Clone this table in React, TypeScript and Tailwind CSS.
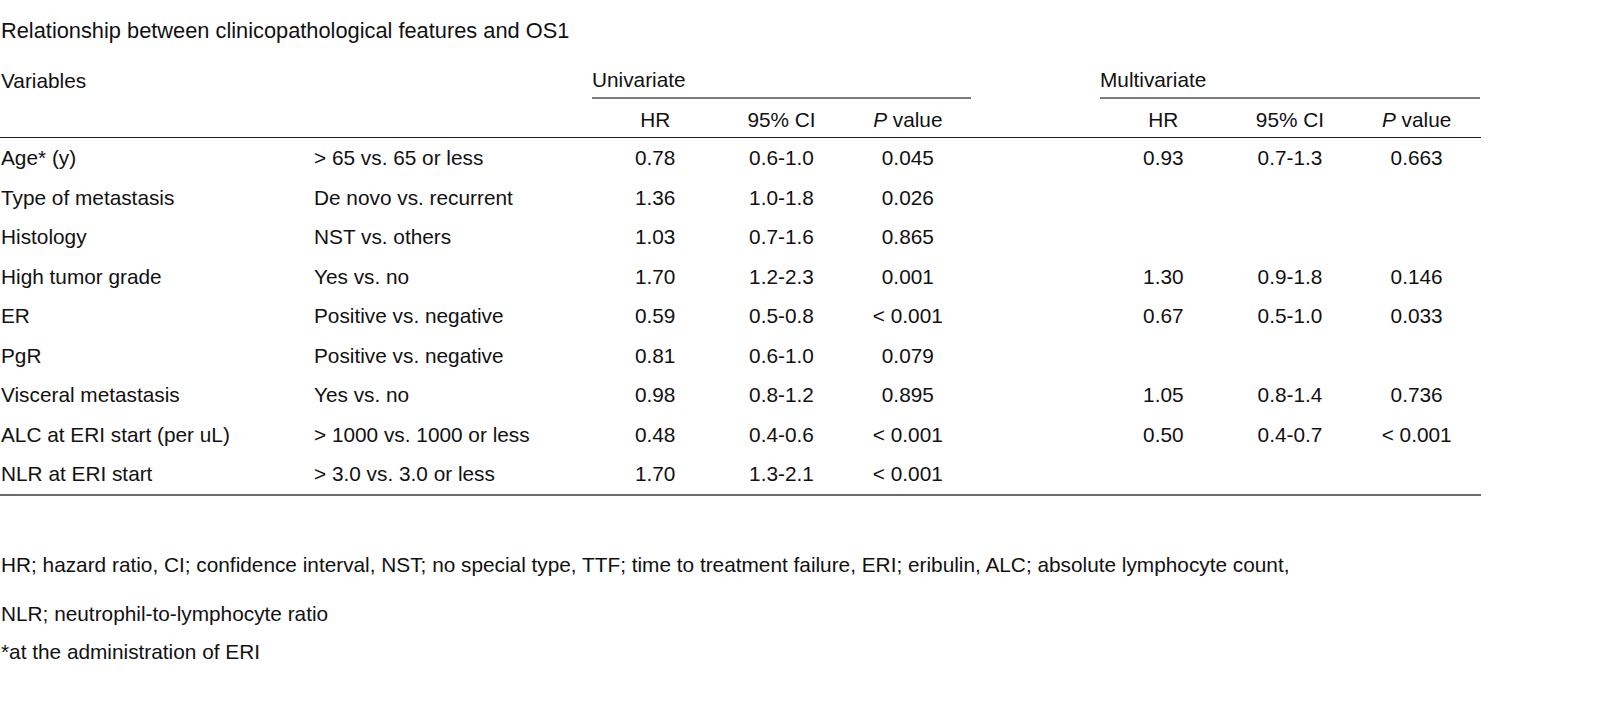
const rows: string[][] = [
  ['Age* (y)', '> 65 vs. 65 or less', '0.78', '0.6-1.0', '0.045', '0.93', '0.7-1.3', '0.663'],
  ['Type of metastasis', 'De novo vs. recurrent', '1.36', '1.0-1.8', '0.026', '', '', ''],
  ['Histology', 'NST vs. others', '1.03', '0.7-1.6', '0.865', '', '', ''],
  ['High tumor grade', 'Yes vs. no', '1.70', '1.2-2.3', '0.001', '1.30', '0.9-1.8', '0.146'],
  ['ER', 'Positive vs. negative', '0.59', '0.5-0.8', '< 0.001', '0.67', '0.5-1.0', '0.033'],
  ['PgR', 'Positive vs. negative', '0.81', '0.6-1.0', '0.079', '', '', ''],
  ['Visceral metastasis', 'Yes vs. no', '0.98', '0.8-1.2', '0.895', '1.05', '0.8-1.4', '0.736'],
  ['ALC at ERI start (per uL)', '> 1000 vs. 1000 or less', '0.48', '0.4-0.6', '< 0.001', '0.50', '0.4-0.7', '< 0.001'],
  ['NLR at ERI start', '> 3.0 vs. 3.0 or less', '1.70', '1.3-2.1', '< 0.001', '', '', ''],
]

function StatCells({ values, wide }: { values: string[]; wide?: boolean }) {
  const w = wide ? 'w-[126.67px]' : 'w-[126.33px]'
  return (
    <>
      {values.map((v, i) => (
        <div key={i} className={`${w} shrink-0 text-center whitespace-nowrap`}>
          {v}
        </div>
      ))}
    </>
  )
}

function PValue() {
  return (
    <>
      <span className="italic">P</span> value
    </>
  )
}

export default function App() {
  return (
    <div
      className="min-h-screen bg-white text-[#111] text-[20.8px] leading-[24px] pt-[19px] pl-px"
      style={{ fontFamily: '"Liberation Sans", Arial, sans-serif' }}
    >
      <div className="h-[24px] whitespace-nowrap text-[21.8px]">
        Relationship between clinicopathological features and OS1
      </div>

      <div className="w-[1480px] mt-[17px]">
        {/* group headers */}
        <div className="flex h-[39px]">
          <div className="w-[592px] shrink-0 flex items-center pt-[3px] -ml-px">
            <span className="pl-px">Variables</span>
          </div>
          <div className="w-[379px] shrink-0 flex items-center pt-[3px] border-b-2 border-[#7d7d7d]">
            Univariate
          </div>
          <div className="w-[129px] shrink-0" />
          <div className="w-[380px] shrink-0 flex items-center pt-[3px] border-b-2 border-[#7d7d7d]">
            Multivariate
          </div>
        </div>

        {/* column headers */}
        <div className="flex items-center h-[39px] pt-[4px] border-b border-[#1c1c1c] -ml-px">
          <div className="w-[592px] shrink-0" />
          <div className="w-[126.33px] shrink-0 text-center">HR</div>
          <div className="w-[126.33px] shrink-0 text-center">95% CI</div>
          <div className="w-[126.33px] shrink-0 text-center">
            <PValue />
          </div>
          <div className="w-[129px] shrink-0" />
          <div className="w-[126.67px] shrink-0 text-center">HR</div>
          <div className="w-[126.67px] shrink-0 text-center">95% CI</div>
          <div className="w-[126.67px] shrink-0 text-center">
            <PValue />
          </div>
        </div>

        {/* body */}
        <div className="border-b-2 border-[#6a6a6a] -ml-px">
          {rows.map((r, i) => (
            <div key={i} className="flex items-center h-[39.5px] pt-px">
              <div className="w-[314px] shrink-0 pl-px whitespace-nowrap">{r[0]}</div>
              <div className="w-[278px] shrink-0 whitespace-nowrap">{r[1]}</div>
              <StatCells values={r.slice(2, 5)} />
              <div className="w-[129px] shrink-0" />
              <StatCells values={r.slice(5, 8)} wide />
            </div>
          ))}
        </div>
      </div>

      <div className="mt-[57px] h-[24px] whitespace-nowrap">
        HR; hazard ratio, CI; confidence interval, NST; no special type, TTF; time to treatment failure, ERI;
        eribulin, ALC; absolute lymphocyte count,
      </div>
      <div className="mt-[25.5px] h-[24px] whitespace-nowrap">NLR; neutrophil-to-lymphocyte ratio</div>
      <div className="mt-[13.5px] h-[24px] whitespace-nowrap">*at the administration of ERI</div>
    </div>
  )
}
